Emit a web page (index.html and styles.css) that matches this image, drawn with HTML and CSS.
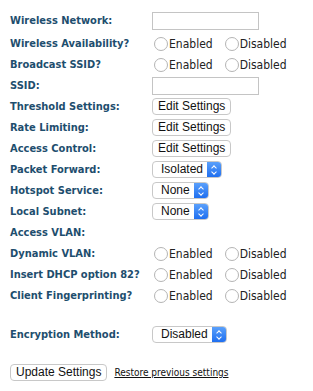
FILE: index.html
```html
<!DOCTYPE html>
<html>
<head>
    <title>Wireless Settings</title>
    <link rel="stylesheet" href="styles.css">
</head>
<body>
    <form class="settings">
        <div class="row first">
            <label class="name">Wireless Network:</label>
            <input type="text" class="text-field">
        </div>
        <div class="row">
            <label class="name">Wireless Availability?</label>
            <div class="choices">
                <label class="choice"><span class="radio"></span>Enabled</label>
                <label class="choice"><span class="radio"></span>Disabled</label>
            </div>
        </div>
        <div class="row">
            <label class="name">Broadcast SSID?</label>
            <div class="choices">
                <label class="choice"><span class="radio"></span>Enabled</label>
                <label class="choice"><span class="radio"></span>Disabled</label>
            </div>
        </div>
        <div class="row">
            <label class="name">SSID:</label>
            <input type="text" class="text-field">
        </div>
        <div class="row">
            <label class="name">Threshold Settings:</label>
            <button type="button" class="btn">Edit Settings</button>
        </div>
        <div class="row">
            <label class="name">Rate Limiting:</label>
            <button type="button" class="btn">Edit Settings</button>
        </div>
        <div class="row">
            <label class="name">Access Control:</label>
            <button type="button" class="btn">Edit Settings</button>
        </div>
        <div class="row">
            <label class="name">Packet Forward:</label>
            <div class="select w-isolated"><span class="value">Isolated</span><span class="arrows"></span></div>
        </div>
        <div class="row">
            <label class="name">Hotspot Service:</label>
            <div class="select w-none"><span class="value">None</span><span class="arrows"></span></div>
        </div>
        <div class="row">
            <label class="name">Local Subnet:</label>
            <div class="select w-none"><span class="value">None</span><span class="arrows"></span></div>
        </div>
        <div class="row">
            <label class="name">Access VLAN:</label>
        </div>
        <div class="row">
            <label class="name">Dynamic VLAN:</label>
            <div class="choices">
                <label class="choice"><span class="radio"></span>Enabled</label>
                <label class="choice"><span class="radio"></span>Disabled</label>
            </div>
        </div>
        <div class="row">
            <label class="name">Insert DHCP option 82?</label>
            <div class="choices">
                <label class="choice"><span class="radio"></span>Enabled</label>
                <label class="choice"><span class="radio"></span>Disabled</label>
            </div>
        </div>
        <div class="row">
            <label class="name">Client Fingerprinting?</label>
            <div class="choices">
                <label class="choice"><span class="radio"></span>Enabled</label>
                <label class="choice"><span class="radio"></span>Disabled</label>
            </div>
        </div>
        <div class="row encryption">
            <label class="name">Encryption Method:</label>
            <div class="select w-disabled"><span class="value">Disabled</span><span class="arrows"></span></div>
        </div>
        <div class="actions">
            <button type="button" class="btn">Update Settings</button>
            <a href="#" class="restore">Restore previous settings</a>
        </div>
    </form>
</body>
</html>
```

FILE: styles.css
```css
body {
    margin: 0;
    padding: 10px 10px 0 10px;
    background: #fff;
    font-family: "DejaVu Sans Condensed", "DejaVu Sans", sans-serif;
}
.row {
    display: flex;
    align-items: center;
    height: 21px;
}
.row.first {
    margin-bottom: 2px;
}
.name {
    width: 142px;
    font-size: 11px;
    font-weight: bold;
    color: #1e4e6e;
}
.text-field {
    width: 107px;
    height: 18px;
    box-sizing: border-box;
    border: 1px solid #c4c4c4;
    margin: 0;
    padding: 0;
}
.choices {
    display: flex;
    gap: 10px;
}
.choice {
    display: flex;
    align-items: center;
    font-size: 12px;
    color: #222;
}
.radio {
    width: 14px;
    height: 14px;
    box-sizing: border-box;
    border: 1px solid #b4b4b4;
    border-radius: 50%;
    margin: 0 1px 0 2px;
    background: #fff;
}
.btn {
    font-family: "Liberation Sans", Arial, sans-serif;
    font-size: 12px;
    color: #111;
    background: #fff;
    border: 1px solid #c8c8c8;
    border-radius: 4px;
    height: 17px;
    padding: 0 5px;
    line-height: 15px;
}
.select {
    display: flex;
    height: 17px;
    box-sizing: border-box;
    border: 1px solid #c8c8c8;
    border-radius: 4px;
    overflow: hidden;
    font-family: "Liberation Sans", Arial, sans-serif;
    font-size: 12px;
    color: #111;
}
.select .value {
    flex: 1;
    padding-left: 8px;
    line-height: 15px;
}
.select .arrows {
    width: 14px;
    background: linear-gradient(#5aa0fb, #1f6ff0);
    position: relative;
}
.select .arrows::before,
.select .arrows::after {
    content: "";
    position: absolute;
    left: 5px;
    width: 3px;
    height: 3px;
    border-left: 1px solid #fff;
    border-top: 1px solid #fff;
}
.select .arrows::before {
    top: 4px;
    transform: rotate(45deg);
}
.select .arrows::after {
    top: 8px;
    transform: rotate(225deg);
}
.w-isolated { width: 70px; }
.w-none { width: 57px; }
.w-disabled { width: 75px; }
.encryption {
    margin-top: 18px;
}
.actions {
    display: flex;
    align-items: center;
    gap: 7px;
    margin-top: 19px;
}
.restore {
    font-family: "DejaVu Sans Condensed", "DejaVu Sans", sans-serif;
    font-size: 10px;
    color: #111;
}
```
